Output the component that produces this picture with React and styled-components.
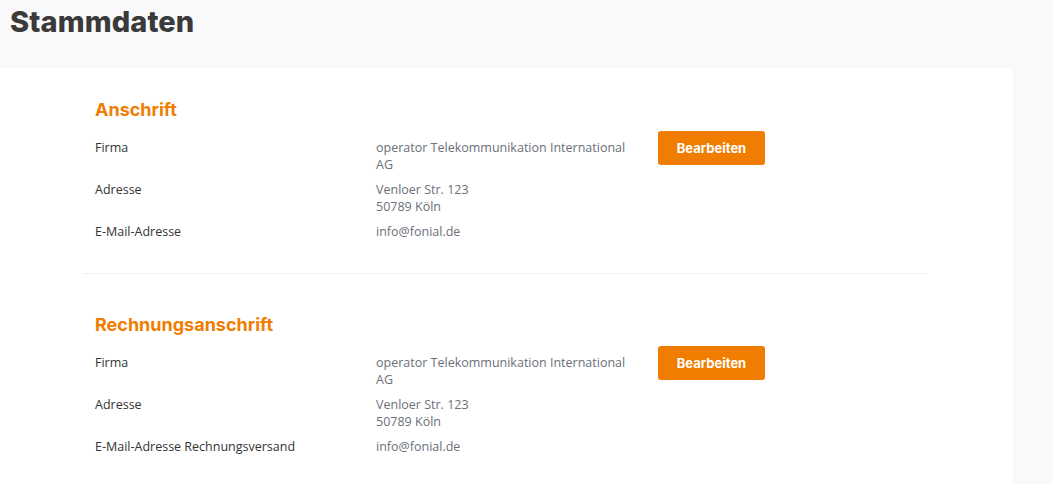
import React from 'react';
import styled, { createGlobalStyle } from 'styled-components';

const sections = [
  {
    title: 'Anschrift',
    rows: [
      { label: 'Firma', value: ['operator Telekommunikation International AG'] },
      { label: 'Adresse', value: ['Venloer Str. 123', '50789 Köln'] },
      { label: 'E-Mail-Adresse', value: ['info@fonial.de'] },
    ],
  },
  {
    title: 'Rechnungsanschrift',
    rows: [
      { label: 'Firma', value: ['operator Telekommunikation International AG'] },
      { label: 'Adresse', value: ['Venloer Str. 123', '50789 Köln'] },
      { label: 'E-Mail-Adresse Rechnungsversand', value: ['info@fonial.de'] },
    ],
  },
];

const App = () => {
  return (
    <>
      <GlobalStyle />
      <Page>
        <Title>Stammdaten</Title>
        <Panel>
          {sections.map((section, i) => (
            <Section key={section.title} last={i === sections.length - 1}>
              <Heading>{section.title}</Heading>
              <Grid>
                {section.rows.map((row, r) => (
                  <React.Fragment key={row.label}>
                    <Label>{row.label}</Label>
                    <Value>
                      {row.value.map((line) => (
                        <div key={line}>{line}</div>
                      ))}
                    </Value>
                    <Action>{r === 0 && <Button>Bearbeiten</Button>}</Action>
                  </React.Fragment>
                ))}
              </Grid>
            </Section>
          ))}
        </Panel>
      </Page>
    </>
  );
};

const GlobalStyle = createGlobalStyle`
  html, body {
    margin: 0;
    padding: 0;
    background: #f9f9fb;
  }
  body {
    font-family: "Open Sans", sans-serif;
  }
`;

const Page = styled.div`
  min-height: 484px;
  background: #f9f9fb;
`;

const Title = styled.h1`
  margin: 0;
  padding: 4px 10px 0;
  height: 68px;
  box-sizing: border-box;
  font-family: Inter, sans-serif;
  font-weight: 800;
  font-size: 29px;
  line-height: 36px;
  color: #3a3a3a;
  letter-spacing: 0.1px;
`;

const Panel = styled.div`
  width: 1013px;
  min-height: 416px;
  background: #ffffff;
  padding: 31px 85px 0 83px;
  box-sizing: border-box;
`;

const Section = styled.section`
  padding: 0 12px ${(p) => (p.last ? '20px' : '33px')};
  margin-bottom: ${(p) => (p.last ? '0' : '40px')};
  border-bottom: ${(p) => (p.last ? 'none' : '1px solid #f0f0f2')};
`;

const Heading = styled.h2`
  margin: 0 0 18px;
  font-family: Inter, sans-serif;
  font-weight: 700;
  font-size: 18px;
  line-height: 22px;
  color: #f07d00;
`;

const Grid = styled.div`
  display: grid;
  grid-template-columns: 259px 260px auto;
  column-gap: 22px;
  row-gap: 8px;
  align-items: start;
`;

const Label = styled.div`
  font-size: 12.5px;
  line-height: 17px;
  color: #333333;
`;

const Value = styled.div`
  font-size: 12.5px;
  line-height: 17px;
  color: #6b7079;
`;

const Action = styled.div`
  display: flex;
`;

const Button = styled.button`
  width: 107px;
  height: 34px;
  margin: -8px 0;
  border: none;
  border-radius: 3px;
  background: #f07d00;
  color: #ffffff;
  font-family: Inter, sans-serif;
  font-weight: 700;
  font-size: 13px;
  cursor: pointer;
`;

export default App;
